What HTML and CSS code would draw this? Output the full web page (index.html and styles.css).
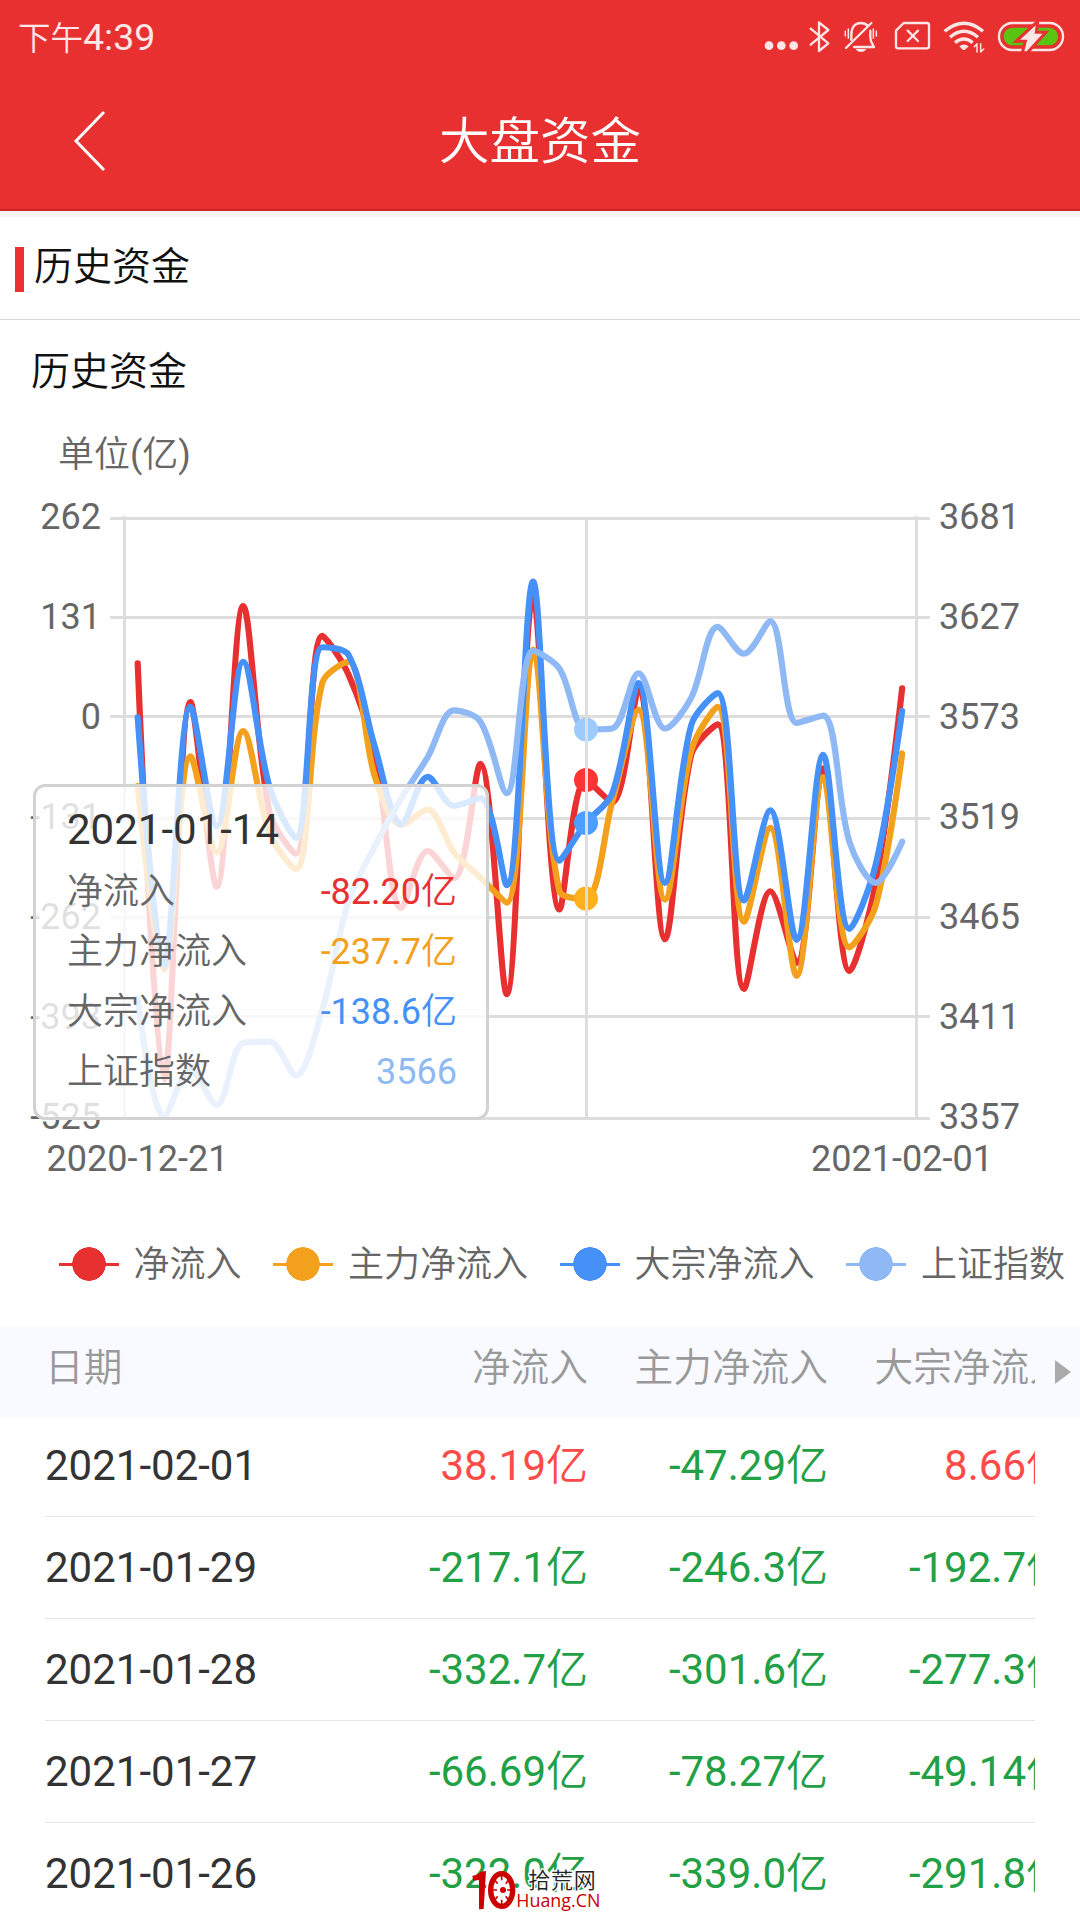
FILE: index.html
```html
<!DOCTYPE html>
<html lang="zh-CN">
<head>
  <meta charset="utf-8">
  <title>大盘资金</title>
  <link rel="stylesheet" href="styles.css">
</head>
<body>

<!-- red top area: status bar + title -->
<div class="top">
  <div class="status">
    <div class="clock"><span class="ampm">下午</span>4:39</div>
    <svg class="status_icons" viewBox="0 0 1020 240">
      <!-- more -->
      <g fill="#fde6e6">
        <circle cx="87" cy="137" r="13"/><circle cx="124" cy="137" r="13"/><circle cx="161" cy="137" r="13"/>
      </g>
      <!-- bluetooth -->
      <path class="ico" d="M212 86 L265 130 L237 153 V67 L265 90 L212 134"/>
      <!-- muted bell -->
      <path class="ico" d="M334 120 V104 C334 82 345 69 362 69 C372 69 379 72 384 78 M391 92 V112 C391 126 396 132 402 141 H342"/>
      <path class="ico" d="M318 144 L394 69"/>
      <path d="M347 147 H379 Q374 156 363 156 Q352 156 347 147Z" fill="#fde6e6"/>
      <path class="ico thin" d="M325 87 V115 M316 94 V108 M400 87 V115 M409 94 V108"/>
      <!-- no sim -->
      <path class="ico" d="M491 69 H561 Q567 69 567 75 V139 Q567 145 561 145 H474 Q468 145 468 139 V92 Z"/>
      <path class="ico" d="M503 92 L534 123 M534 92 L503 123"/>
      <!-- wifi -->
      <path class="ico wave" d="M614 94 Q672 46 729 94 M630 112 Q672 76 714 112 M645 128 Q672 106 698 128"/>
      <path d="M658 139 Q672 128 686 139 L675 149 Q672 151 668 149Z" fill="#fde6e6"/>
      <path class="ico thin" d="M711 156 V131 L703 140 M722 131 V156 L731 147"/>
      <!-- battery -->
      <rect class="ico" x="777" y="69" width="192" height="81" rx="40"/>
      <rect x="791" y="83" width="163" height="53" rx="26" fill="#59c512"/>
      <path d="M893 64 L828 124 H856 L847 158 H862 L918 97 H889 Z" fill="#fde6e6" stroke="#e93030" stroke-width="9"/>
    </svg>
  </div>
  <div class="titlebar">
    <svg class="back" viewBox="0 0 36 64"><path d="M32 3 L4 32 L32 61" /></svg>
    <h1 class="title">大盘资金</h1>
  </div>
</div>

<div class="section"><span class="mark"></span>历史资金</div>

<h2 class="subtitle">历史资金</h2>

<!-- chart, lines are drawn by the script below -->
<div class="chart">
  <svg class="plot" viewBox="0 420 1080 780">
    <g class="labels">
      <text x="58" y="467">单位(亿)</text>
    </g>
    <g id="grid"></g>
    <g id="lines"></g>
    <g id="dots"></g>
    <path class="grid" d="M586.5 518 V1118"/>
    <g class="labels">
      <text x="137.5" y="1171" text-anchor="middle">2020-12-21</text>
      <text x="902" y="1171" text-anchor="middle">2021-02-01</text>
    </g>
  </svg>
  <div class="tooltip">
    <div class="day">2021-01-14</div>
    <div class="line"><span>净流入</span><b class="c_red">-82.20亿</b></div>
    <div class="line"><span>主力净流入</span><b class="c_orange">-237.7亿</b></div>
    <div class="line"><span>大宗净流入</span><b class="c_blue">-138.6亿</b></div>
    <div class="line"><span>上证指数</span><b class="c_light">3566</b></div>
  </div>
</div>

<div class="legend">
  <div class="item"><i class="dot bg_red"></i>净流入</div>
  <div class="item"><i class="dot bg_orange"></i>主力净流入</div>
  <div class="item"><i class="dot bg_blue"></i>大宗净流入</div>
  <div class="item"><i class="dot bg_light"></i>上证指数</div>
</div>

<!-- table -->
<div class="thead">
  <div class="row">
    <span>日期</span><span>净流入</span><span>主力净流入</span><span>大宗净流入</span>
  </div>
  <svg class="more" viewBox="0 0 16 24"><path d="M0 0 L16 12 L0 24Z"/></svg>
</div>
<div class="tbody">
  <div class="row"><span>2021-02-01</span><span class="up">38.19亿</span><span class="down">-47.29亿</span><span class="up">8.66亿</span></div>
  <div class="row"><span>2021-01-29</span><span class="down">-217.1亿</span><span class="down">-246.3亿</span><span class="down">-192.7亿</span></div>
  <div class="row"><span>2021-01-28</span><span class="down">-332.7亿</span><span class="down">-301.6亿</span><span class="down">-277.3亿</span></div>
  <div class="row"><span>2021-01-27</span><span class="down">-66.69亿</span><span class="down">-78.27亿</span><span class="down">-49.14亿</span></div>
  <div class="row"><span>2021-01-26</span><span class="down">-322.0亿</span><span class="down">-339.0亿</span><span class="down">-291.8亿</span></div>
</div>

<!-- site logo over the last row -->
<svg class="logo" viewBox="0 0 390 150">
  <path d="M16 17 Q36 14 40 5 L57 3 L50 117 L36 118 L36 30 L19 32Z" fill="#c00"/>
  <ellipse cx="104" cy="60" rx="33" ry="49" fill="#fff" stroke="#c00" stroke-width="16"/>
  <path d="M104 18 V31 M104 89 V102 M78 60 H90 M84 31 L92 41 M124 31 L116 41 M84 89 L92 79 M124 89 L116 79 M130 60 H120" stroke="#c00" stroke-width="5"/>
  <circle cx="108" cy="60" r="9" fill="#c00"/>
  <text class="logo_cn" x="184" y="54" textLength="202">拾荒网</text>
  <text class="logo_en" x="148" y="111" textLength="252" lengthAdjust="spacingAndGlyphs">Huang.CN</text>
</svg>

<script>
  // values of the 4 series, 30 trading days
  var ZERO = 717.4, UNIT = 0.7624;
  var red = [71, -475, 20, -222, 146, -124, -179, 107, 56, -49, -250, -175, -211, -61, -363, 160, -252, -82.2, -111, 36, -291, -49, -9, -356, -228, -322, -66.69, -332.7, -217.1, 38.19];
  var orange = [-90, -331, -51, -177, -18, -152, -199, 45, 73, -78, -141, -121, -177, -210, -243, 89, -228, -237.7, -111, 10, -239, -43, 14, -268, -145, -339, -78.27, -301.6, -246.3, -47.29];
  var blue = [0, -326, 14, -143, 73, -91, -158, 92, 82, -39, -140, -78, -116, -106, -220, 178, -188, -138.6, -100, 45, -217, -10, 32, -240, -122, -291.8, -49.14, -277.3, -192.7, 8.66];
  var index = [3420.57, 3356.78, 3382.32, 3363.11, 3396.56, 3397.29, 3379.04, 3414.45, 3473.07, 3502.96, 3528.68, 3550.88, 3576.20, 3570.11, 3531.50, 3608.34, 3598.65, 3565.90, 3566.38, 3596.22, 3566.38, 3583.09, 3621.26, 3606.75, 3624.24, 3569.43, 3573.34, 3505.18, 3483.07, 3505.28];

  function px(i) { return 137.7 + i * 26.36; }
  function flow(v) { return ZERO - v * UNIT; }
  function idx(v) { return 1116.7 - (v - 3356.78) * 1.852; }
  function clamp(v, a, b) { return Math.max(Math.min(v, Math.max(a, b)), Math.min(a, b)); }

  // smooth curve through all points, control points stay between neighbours
  var SMOOTH = 0.33;
  function curve(ys) {
    var d = 'M' + px(0) + ' ' + ys[0];
    var cx = px(0), cy = ys[0];
    for (var i = 1; i < ys.length; i++) {
      var x = px(i), y = ys[i], x1 = x, y1 = y, nx = x, ny = y;
      if (i < ys.length - 1) {
        var xp = px(i - 1), yp = ys[i - 1], xn = px(i + 1), yn = ys[i + 1];
        var lp = Math.hypot(x - xp, y - yp), ln = Math.hypot(xn - x, yn - y);
        var r = ln / (ln + lp);
        nx = clamp(x + (xn - xp) * SMOOTH * r, x, xn);
        ny = clamp(y + (yn - yp) * SMOOTH * r, y, yn);
        x1 = clamp(x - (nx - x) * lp / ln, xp, x);
        y1 = clamp(y - (ny - y) * lp / ln, yp, y);
        nx = x + (x - x1) * ln / lp;
        ny = y + (y - y1) * ln / lp;
      }
      d += 'C' + [cx, cy, x1, y1, x, y].join(' ');
      cx = nx;
      cy = ny;
    }
    return d;
  }

  // grid + axis labels
  var left = [262, 131, 0, -131, -262, -393, -525];
  var right = [3681, 3627, 3573, 3519, 3465, 3411, 3357];
  var ypos = [518.5, 617.5, 716.5, 818.5, 917.5, 1016.5, 1118.5];
  var g = '';
  for (var i = 0; i < 7; i++) {
    g += '<path class="grid" d="M110 ' + ypos[i] + 'H930"/>';
    g += '<text class="axis" text-anchor="end" x="101" y="' + (529 + i * 100) + '">' + left[i] + '</text>';
    g += '<text class="axis" x="939" y="' + (529 + i * 100) + '">' + right[i] + '</text>';
  }
  g += '<path class="grid" d="M124.5 516V1119M916.5 516V1119"/>';
  document.getElementById('grid').innerHTML = g;

  var series = [
    [red.map(flow), '#e93030', '#ff3535'],
    [orange.map(flow), '#f3a01c', '#ffb01f'],
    [blue.map(flow), '#4591f7', '#4c9fff'],
    [index.map(idx), '#8fb9f5', '#9dcbff']
  ];
  var l = '', c = '';
  series.forEach(function (s) {
    l += '<path class="serie" stroke="' + s[1] + '" d="' + curve(s[0]) + '"/>';
    c += '<circle cx="586" cy="' + s[0][17] + '" r="12" fill="' + s[2] + '"/>';
  });
  document.getElementById('lines').innerHTML = l;
  document.getElementById('dots').innerHTML = c;
</script>
</body>
</html>
```
FILE: styles.css
```css
* {
  margin: 0;
  padding: 0;
  box-sizing: border-box;
}
body {
  position: relative;
  width: 1080px;
  height: 1920px;
  overflow: hidden;
  background: #fff;
  color: #333;
  font-family: Roboto, "Noto Sans CJK SC DemiLight", "Noto Sans CJK SC", sans-serif;
}

/* top */
.top {
  height: 217px;
  background: #e93030;
  border-bottom: 6px solid #f4f4f4;
  box-shadow: inset 0 -2px 0 #cb252b;
}
.status {
  display: flex;
  justify-content: space-between;
  height: 80px;
}
.clock {
  padding-left: 18px;
  line-height: 75px;
  font-size: 37.5px;
  color: #fde6e6;
}
.ampm {
  font-size: 32.5px;
}
.status_icons {
  width: 340px;
  height: 80px;
}
.ico {
  fill: none;
  stroke: #fde6e6;
  stroke-width: 7;
  stroke-linecap: round;
  stroke-linejoin: round;
}
.thin {
  stroke-width: 4.5;
}
.wave {
  stroke-width: 10;
  stroke-linecap: butt;
}
.titlebar {
  display: grid;
  grid-template-columns: 180px 1fr 180px;
  align-items: center;
  height: 124px;
}
.back {
  width: 36px;
  height: 64px;
  margin: -3px 0 0 72px;
}
.back path {
  fill: none;
  stroke: #fff;
  stroke-width: 3;
}
.title {
  font-size: 50.5px;
  font-weight: 400;
  line-height: 124px;
  text-align: center;
  color: #fff;
}

/* headings */
.section {
  display: flex;
  align-items: center;
  height: 103px;
  padding: 0 0 10px 15px;
  border-bottom: 1px solid #d8d8d8;
  font-size: 39px;
  color: #111;
}
.mark {
  width: 9px;
  height: 45px;
  margin: 13px 10px 0 0;
  background: #ec3032;
}
.subtitle {
  height: 100px;
  padding-left: 31px;
  line-height: 105px;
  font-size: 39px;
  font-weight: 400;
  color: #111;
}

/* chart */
.chart {
  position: relative;
  height: 780px;
}
.plot {
  display: block;
  width: 1080px;
  height: 780px;
}
.labels text, .axis {
  font-size: 36px;
  fill: #666;
}
.grid {
  fill: none;
  stroke: #ddd;
  stroke-width: 3;
}
.serie {
  fill: none;
  stroke-width: 6.2;
  stroke-linecap: round;
  stroke-linejoin: round;
}
.tooltip {
  position: absolute;
  left: 33px;
  top: 364px;
  width: 456px;
  height: 336px;
  padding: 12px 29px 0 31px;
  border: 3px solid #d2d2d2;
  border-radius: 12px;
  background: rgba(255, 255, 255, 0.8);
}
.day {
  height: 63px;
  line-height: 62px;
  font-size: 42px;
  color: #333;
}
.line {
  display: flex;
  justify-content: space-between;
  height: 60px;
  line-height: 60px;
  font-size: 36px;
  color: #666;
}
.line b {
  font-weight: 400;
}
.c_red { color: #e93030; }
.c_orange { color: #f3a01c; }
.c_blue { color: #4591f7; }
.c_light { color: #8fb9f5; }

/* legend */
.legend {
  display: flex;
  gap: 31.5px;
  height: 127px;
  padding-left: 58.5px;
  white-space: nowrap;
}
.item {
  display: flex;
  align-items: center;
  gap: 15px;
  height: 128px;
  padding-bottom: 6px;
  font-size: 36px;
  color: #666;
}
.dot {
  width: 60px;
  height: 34px;
  margin-top: 6px;
}
.bg_red { background: radial-gradient(circle, #e93030 16.5px, transparent 17px), linear-gradient(#e93030, #e93030) center / 60px 3px no-repeat; }
.bg_orange { background: radial-gradient(circle, #f3a01c 16.5px, transparent 17px), linear-gradient(#f3a01c, #f3a01c) center / 60px 3px no-repeat; }
.bg_blue { background: radial-gradient(circle, #4591f7 16.5px, transparent 17px), linear-gradient(#4591f7, #4591f7) center / 60px 3px no-repeat; }
.bg_light { background: radial-gradient(circle, #8fb9f5 16.5px, transparent 17px), linear-gradient(#8fb9f5, #8fb9f5) center / 60px 3px no-repeat; }

/* table */
.thead {
  display: flex;
  align-items: center;
  gap: 20px;
  height: 90px;
  background: #f8faff;
}
.row {
  display: grid;
  grid-template-columns: 303px 240px 240px 240px;
  width: 990px;
  height: 102px;
  margin-left: 45px;
  overflow: hidden;
  border-bottom: 1px solid #e6e6e6;
  line-height: 102px;
  font-size: 42px;
  color: #333;
  white-space: nowrap;
}
.row span + span {
  text-align: right;
}
.thead .row {
  height: 90px;
  border: 0;
  line-height: 82px;
  font-size: 38.7px;
  color: #999;
}
.tbody .row:first-child {
  height: 100px;
  line-height: 98px;
}
.more {
  width: 16px;
  height: 24px;
  fill: #aaa;
}
.row .up { color: #ff4a4a; }
.row .down { color: #22a045; }

/* logo */
.logo {
  position: absolute;
  left: 467px;
  top: 1870px;
  width: 130px;
  height: 50px;
  overflow: visible;
}
.logo text {
  paint-order: stroke;
  stroke: #fff;
  stroke-width: 8px;
}
.logo_cn {
  font-size: 66px;
  fill: #222;
}
.logo_en {
  font-family: "Open Sans", sans-serif;
  font-size: 54px;
  fill: #c00;
}
```
